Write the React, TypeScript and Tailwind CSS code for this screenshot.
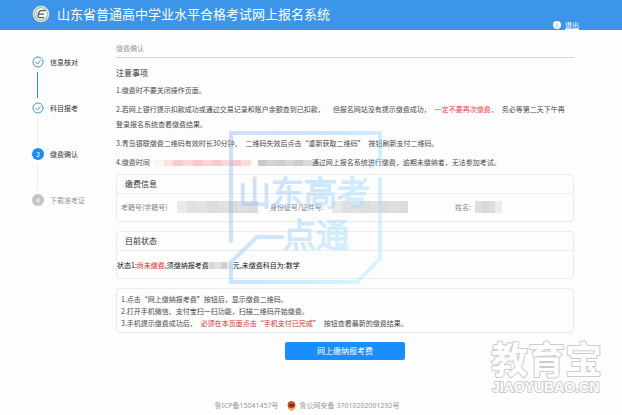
import { ReactNode } from "react";
import clsx from "clsx";

type StepState = "done" | "current" | "todo";

interface Step {
  label: string;
  state: StepState;
}

const STEPS: Step[] = [
  { label: "信息核对", state: "done" },
  { label: "科目报考", state: "done" },
  { label: "缴费确认", state: "current" },
  { label: "下载准考证", state: "todo" },
];

function Emblem() {
  return (
    <svg viewBox="0 0 36 36" className="w-[18px] h-[18px] shrink-0" aria-hidden="true">
      <circle cx="18" cy="18" r="17" fill="#7fa9a5" />
      <circle cx="18" cy="18" r="15" fill="none" stroke="#e0e3cf" strokeWidth="3" />
      <circle cx="18" cy="18" r="12" fill="#f4f7f4" />
      <path d="M27 11H18c-2 0-3 1-4 3l-2 8c0 2 1 3 3 3h9M13 18h11" fill="none" stroke="#4a5f60" strokeWidth="2.500" />
      <path d="M10 12c-2 5-1 10 2 14" fill="none" stroke="#b3a95c" strokeWidth="1.500" />
    </svg>
  );
}

function UserIcon() {
  return (
    <svg viewBox="0 0 16 16" className="w-2 h-2" aria-hidden="true">
      <circle cx="8" cy="8" r="8" fill="#fff" />
      <circle cx="8" cy="6" r="2" fill="none" stroke="#a9cdee" strokeWidth="1.500" />
      <path d="M4.500 12c0-5 7-5 7 0z" fill="none" stroke="#a9cdee" strokeWidth="1.500" />
    </svg>
  );
}

function PoliceBadge() {
  return (
    <svg viewBox="0 0 18 20" className="w-[9px] h-[10px]" aria-hidden="true">
      <path d="M3 2 9 0l6 2 2 6-2 7-6 4-6-4-2-7z" fill="#c4472f" />
      <path d="M2 11c3 4 11 4 14 0l-2 6-5 3-5-3z" fill="#e3a94c" />
      <path d="M5 6h8v5H5z" fill="#80261c" />
      <path d="M9 3l1 2H8z" fill="#f3cf62" />
    </svg>
  );
}

function StepDot({ state, index }: { state: StepState; index: number }) {
  if (state === "done") {
    return (
      <svg viewBox="0 0 24 24" className="w-3 h-3" aria-hidden="true">
        <circle cx="12" cy="12" r="10" fill="#fff" stroke="#3f93dc" strokeWidth="2" />
        <path d="M7 12l4 4 6-7" fill="none" stroke="#3f93dc" strokeWidth="2" />
      </svg>
    );
  }
  return (
    <span
      className={clsx(
        "w-3 h-3 rounded-full flex items-center justify-center text-[7px] leading-none text-white",
        state === "current" ? "bg-[#1a8cfa]" : "bg-[#c4c4c4]"
      )}
    >
      {index}
    </span>
  );
}

function Steps() {
  return (
    <ol className="w-[116px] shrink-0 pt-[26px] pl-8">
      {STEPS.map((step, i) => (
        <li key={step.label}>
          <div className="flex items-center gap-[6px] h-3">
            <StepDot state={step.state} index={i + 1} />
            <span
              className={clsx(
                "text-[7px] leading-3 whitespace-nowrap",
                step.state === "todo" ? "text-[#999]" : "text-[#333]"
              )}
            >
              {step.label}
            </span>
          </div>
          {i < STEPS.length - 1 && (
            <div className={clsx("w-px h-[26px] my-1 ml-[5px]", i === 0 ? "bg-[#2b8ae6]" : "bg-[#ececec]")} />
          )}
        </li>
      ))}
    </ol>
  );
}

// masked personal data
function Mask({ tones, className }: { tones: string[]; className: string }) {
  return (
    <span className={clsx("inline-flex align-middle overflow-hidden", className)} aria-hidden="true">
      {tones.map((tone, i) => (
        <span key={i} className={clsx("flex-1", tone)} />
      ))}
    </span>
  );
}

const GRAYS = ["bg-[#e9e9e9]", "bg-[#e0e0e0]", "bg-[#e3e3e3]", "bg-[#dddddd]", "bg-[#e1e1e1]", "bg-[#dbdbdb]", "bg-[#dfdfdf]", "bg-[#dcdcdc]"];
const DARK_GRAYS = ["bg-[#c9c9cc]", "bg-[#d4d4d6]", "bg-[#cfcfd2]", "bg-[#d6d6d6]", "bg-[#cdcdcd]", "bg-[#dadada]"];
const PINKS = ["bg-[#fbf5f5]", "bg-[#fae4e4]", "bg-[#f8cccc]", "bg-[#fad8d8]", "bg-[#f7c8c8]", "bg-[#f9d5d5]", "bg-[#f8cccc]", "bg-[#fadada]", "bg-[#f8caca]", "bg-[#fbdddd]"];

function Panel({ title, children }: { title: string; children: ReactNode }) {
  return (
    <section className="h-12 border border-[#ebebeb] rounded-sm">
      <h2 className="h-[19px] pl-2 border-b border-[#ededed] text-[8px] leading-[18px] text-[#333]">{title}</h2>
      {children}
    </section>
  );
}

function ExamWatermark() {
  return (
    <svg
      viewBox="0 0 154 154"
      className="absolute left-[229px] top-[131px] w-[154px] h-[154px] opacity-45 pointer-events-none"
      aria-hidden="true"
    >
      <defs>
        <linearGradient id="wm" gradientUnits="userSpaceOnUse" x1="0" y1="20" x2="150" y2="110">
          <stop offset="0" stopColor="#99b9fb" />
          <stop offset="0.5" stopColor="#91cdfb" />
          <stop offset="1" stopColor="#abe8fa" />
        </linearGradient>
      </defs>
      <g fill="none" stroke="url(#wm)" strokeWidth="4" strokeLinecap="round">
        <path d="M2 110V2H151V27L142 36" />
        <path d="M151 48V128L128 151H2V131L28 106H53" />
      </g>
      <g
        fill="url(#wm)"
        stroke="url(#wm)"
        strokeWidth="2"
        strokeLinecap="round"
        strokeLinejoin="round"
        fontSize="33"
        fontWeight="300"
        fontFamily="'Noto Sans CJK SC', sans-serif"
      >
        <text x="9" y="74">山东高考</text>
        <text x="54" y="116">点通</text>
      </g>
    </svg>
  );
}

function SiteWatermark() {
  return (
    <svg
      viewBox="0 -14 120 74"
      className="absolute left-[489px] top-[327px] w-[120px] h-[74px] pointer-events-none"
      aria-hidden="true"
    >
      <g fill="#fdfdfd" stroke="#cccccc" strokeWidth="2" strokeLinejoin="round" paintOrder="stroke" fontWeight="700">
        <text x="2" y="33" fontSize="37" fontFamily="'Noto Sans CJK SC', sans-serif">教育宝</text>
        <text x="3" y="51" fontSize="14" fontFamily="'Liberation Sans', sans-serif">JIAOYUBAO.CN</text>
      </g>
    </svg>
  );
}

export default function App() {
  return (
    <div className="relative min-h-screen bg-[#fdfdfd] font-['Noto_Sans_CJK_SC',sans-serif] text-[7px] text-[#4a4a4a]">
      <header className="h-[30px] bg-[#3c95e8] pl-8 pr-[43px] flex justify-between text-white">
        <div className="flex items-center gap-[7px] h-7">
          <Emblem />
          <h1 className="text-[13px] leading-7 whitespace-nowrap">山东省普通高中学业水平合格考试网上报名系统</h1>
        </div>
        <div className="flex items-center gap-1 self-end h-[10px]">
          <UserIcon />
          <a href="#logout" className="underline leading-[10px]">退出</a>
        </div>
      </header>

      <div className="flex">
        <Steps />

        <main className="flex-1 min-w-0 mr-12">
          <p className="pt-[9px] leading-[18px] border-b border-[#d4d4d4] text-[#999]">缴费确认</p>

          <h2 className="mt-1 text-[8px] leading-[21px] text-[#333]">注意事项</h2>
          <div className="space-y-1 leading-[15px]">
            <p>1.缴费时不要关闭操作页面。</p>
            <p>
              <span className="mr-2">2.若网上银行提示扣款成功或通过交易记录和账户余额查到已扣款，</span>
              <span className="mr-1">但报名网站没有提示缴费成功，</span>
              <span className="mr-1 text-[#e8413c]">一定不要再次缴费，</span>
              务必等第二天下午再
              <br />
              登录报名系统查看缴费结果。
            </p>
            <p>
              <span className="mr-1">3.青岛银联缴费二维码有效时长30分钟，</span>
              <span className="mr-1">二维码失效后点击“重新获取二维码”</span>
              按钮刷新支付二维码。
            </p>
            <p className="flex items-center whitespace-nowrap">
              4.缴费时间
              <Mask tones={PINKS} className="ml-1 w-[97px] h-[6px]" />
              <Mask tones={DARK_GRAYS} className="ml-[7px] w-[54px] h-[6px]" />
              <span>通过网上报名系统进行缴费，逾期未缴纳者，无法参加考试。</span>
            </p>
          </div>

          <div className="mt-1 space-y-[9px]">
            <Panel title="缴费信息">
              <dl className="flex items-center h-[26px] pl-1 text-[#888] whitespace-nowrap">
                <div className="flex items-center w-[149px]">
                  <dt className="w-14">考籍号(学籍号)</dt>
                  <dd className="flex"><Mask tones={GRAYS} className="w-[81px] h-3" /></dd>
                </div>
                <div className="flex items-center w-[185px]">
                  <dt className="w-[62px]">身份证号/证件号:</dt>
                  <dd className="flex"><Mask tones={GRAYS} className="w-[76px] h-3" /></dd>
                </div>
                <div className="flex items-center">
                  <dt className="w-5">姓名:</dt>
                  <dd className="flex"><Mask tones={["bg-[#dedede]", "bg-[#d9d9d9]", "bg-[#dddddd]", "bg-[#ececec]"]} className="w-[27px] h-3" /></dd>
                </div>
              </dl>
            </Panel>

            <Panel title="目前状态">
              <p className="flex items-center h-7 text-[#111] whitespace-nowrap">
                状态1:<span className="text-[#e02020]">尚未缴费</span>,须缴纳报考费
                <Mask tones={["bg-[#d8d8d8]", "bg-[#e2e2e2]", "bg-[#cfcfcf]", "bg-[#ebebeb]"]} className="w-6 h-[7px]" />
                元,未缴费科目为:数学
              </p>
            </Panel>

            <section className="border border-[#ebebeb] rounded-sm pl-1 pt-1 pb-[3px]">
              <ol className="leading-3">
                <li>1.点击“网上缴纳报考费”按钮后，显示缴费二维码。</li>
                <li>2.打开手机微信、支付宝扫一扫功能，扫描二维码开始缴费。</li>
                <li>
                  3.手机提示缴费成功后，
                  <span className="mx-1 text-[#d9302c]">必须在本页面点击“手机支付已完成”</span>
                  按钮查看最新的缴费结果。
                </li>
              </ol>
            </section>
          </div>

          <div className="mt-[9px] flex justify-center">
            <button type="button" className="w-[120px] h-[18px] rounded-xs bg-[#188eff] text-white text-[8px] leading-[18px]">
              网上缴纳报考费
            </button>
          </div>
        </main>
      </div>

      <footer className="mt-10 pr-2 flex justify-center items-center leading-3 text-[#999] font-['Noto_Sans','Noto_Sans_CJK_SC',sans-serif]">
        <span className="mr-2">鲁ICP备15041457号</span>
        <PoliceBadge />
        <span className="ml-1">鲁公网安备 37010202001292号</span>
      </footer>

      <ExamWatermark />
      <SiteWatermark />
    </div>
  );
}
